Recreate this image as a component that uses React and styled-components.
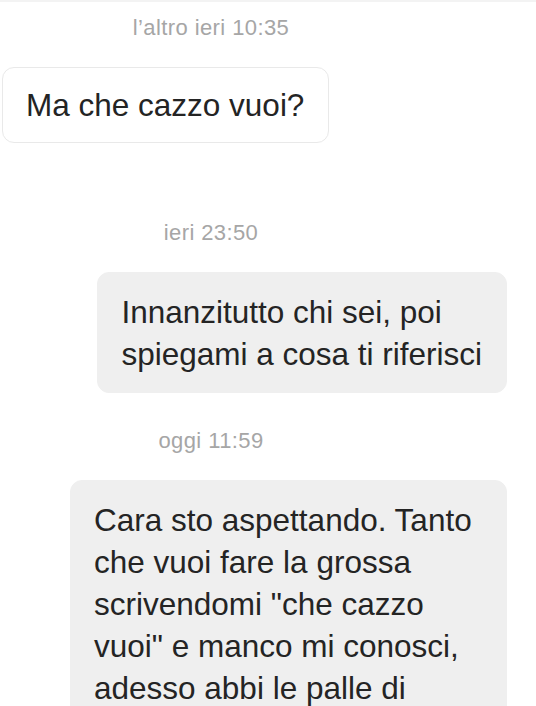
import React from "react";
import styled, { createGlobalStyle } from "styled-components";

const Global = createGlobalStyle`
  html, body { margin: 0; padding: 0; background: #ffffff; }
  body { font-family: "Liberation Sans", Arial, sans-serif; -webkit-font-smoothing: antialiased; }
`;

const Thread = styled.div`
  display: flex;
  flex-direction: column;
  border-top: 2px solid #f3f3f3;
  padding-top: 13px;
  width: 536px;
  box-sizing: border-box;
`;

const Stamp = styled.div`
  font-size: 22px;
  line-height: 26px;
  letter-spacing: 0.4px;
  color: #a6a6a6;
  text-align: center;
  width: 422px;
  margin-top: ${(p) => p.$top || 0}px;
  margin-bottom: 26px;
`;

const Row = styled.div`
  display: flex;
  justify-content: ${(p) => (p.$mine ? "flex-end" : "flex-start")};
  padding: ${(p) => (p.$mine ? "0 29px 0 0" : "0 0 0 2px")};
`;

const Bubble = styled.div`
  box-sizing: border-box;
  max-width: 437px;
  font-size: 31.5px;
  line-height: 42px;
  color: #242424;
  border-radius: 12px;
  background: ${(p) => (p.$mine ? "#efefef" : "#ffffff")};
  border: 1px solid ${(p) => (p.$mine ? "#efefef" : "#e9e9e9")};
  padding: ${(p) => (p.$mine ? "17.5px 24px 17.5px 23px" : "16px 24px 16px 23px")};
`;

export default function App() {
  return (
    <>
      <Global />
      <Thread>
        <Stamp>l’altro ieri 10:35</Stamp>
        <Row>
          <Bubble>Ma che cazzo vuoi?</Bubble>
        </Row>
        <Stamp $top={77}>ieri 23:50</Stamp>
        <Row $mine>
          <Bubble $mine>
            Innanzitutto chi sei, poi
            <br />
            spiegami a cosa ti riferisci
          </Bubble>
        </Row>
        <Stamp $top={35}>oggi 11:59</Stamp>
        <Row $mine>
          <Bubble $mine>
            Cara sto aspettando. Tanto che vuoi fare la grossa scrivendomi "che cazzo vuoi" e manco mi conosci, adesso abbi le palle di
          </Bubble>
        </Row>
      </Thread>
    </>
  );
}
